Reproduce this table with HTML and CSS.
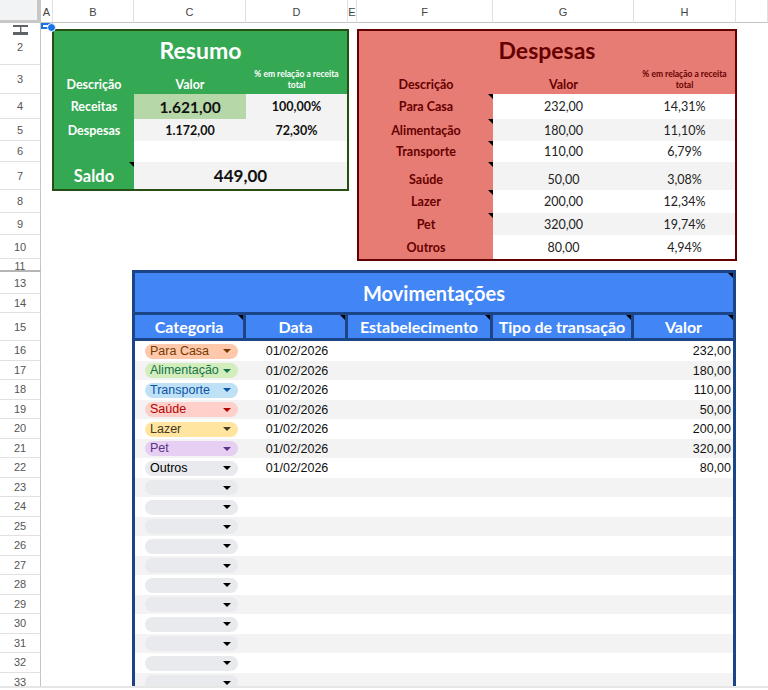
FILE: index.html
```html
<!DOCTYPE html>
<html lang="pt-BR">
<head>
<meta charset="utf-8">
<title>Controle financeiro</title>
<link rel="stylesheet" href="styles.css">
</head>
<body>
<div class="sheet">
  <div class="corner"></div>
  <div class="ch">A</div>
  <div class="ch">B</div>
  <div class="ch">C</div>
  <div class="ch">D</div>
  <div class="ch">E</div>
  <div class="ch">F</div>
  <div class="ch">G</div>
  <div class="ch">H</div>
  <div class="ch"></div>

  <div class="rh r1"><svg class="freeze" width="15" height="10" viewBox="0 0 15 10"><rect x="0" y="0" width="15" height="2" fill="#5f6368"/><rect x="7" y="2" width="1.4" height="5" fill="#5f6368"/><rect x="0" y="7" width="15" height="3" fill="#5f6368"/></svg></div>
  <div class="rh">2</div>
  <div class="rh">3</div>
  <div class="rh">4</div>
  <div class="rh">5</div>
  <div class="rh">6</div>
  <div class="rh">7</div>
  <div class="rh">8</div>
  <div class="rh">9</div>
  <div class="rh">10</div>
  <div class="rh r11">11</div>
  <div class="rh hidden-row"></div>
  <div class="rh">13</div>
  <div class="rh">14</div>
  <div class="rh">15</div>
  <div class="rh">16</div>
  <div class="rh">17</div>
  <div class="rh">18</div>
  <div class="rh">19</div>
  <div class="rh">20</div>
  <div class="rh">21</div>
  <div class="rh">22</div>
  <div class="rh">23</div>
  <div class="rh">24</div>
  <div class="rh">25</div>
  <div class="rh">26</div>
  <div class="rh">27</div>
  <div class="rh">28</div>
  <div class="rh">29</div>
  <div class="rh">30</div>
  <div class="rh">31</div>
  <div class="rh">32</div>
  <div class="rh">33</div>

  <div class="sel"></div>

  <section class="resumo">
    <h2 class="rs-title">Resumo</h2>
    <div class="rs-lab bottom">Descrição</div>
    <div class="rs-lab bottom">Valor</div>
    <div class="pct">% em relação a receita total</div>
    <div class="rs-lab">Receitas</div>
    <div class="rs-val rec">1.621,00</div>
    <div class="rs-val gray">100,00%</div>
    <div class="rs-lab">Despesas</div>
    <div class="rs-val gray">1.172,00</div>
    <div class="rs-val gray">72,30%</div>
    <div class="rs-lab"></div>
    <div class="rs-val"></div>
    <div class="rs-val"></div>
    <div class="rs-lab saldo note">Saldo</div>
    <div class="rs-val saldo-v gray">449,00</div>
  </section>

  <section class="despesas">
    <h2 class="ds-title">Despesas</h2>
    <div class="ds-lab bottom">Descrição</div>
    <div class="ds-lab bottom">Valor</div>
    <div class="pct dark">% em relação a receita total</div>

    <div class="ds-lab note">Para Casa</div><div class="ds-val">232,00</div><div class="ds-val">14,31%</div>
    <div class="ds-lab note">Alimentação</div><div class="ds-val gray">180,00</div><div class="ds-val gray">11,10%</div>
    <div class="ds-lab note">Transporte</div><div class="ds-val">110,00</div><div class="ds-val">6,79%</div>
    <div class="ds-lab note low">Saúde</div><div class="ds-val gray low">50,00</div><div class="ds-val gray low">3,08%</div>
    <div class="ds-lab note">Lazer</div><div class="ds-val">200,00</div><div class="ds-val">12,34%</div>
    <div class="ds-lab note">Pet</div><div class="ds-val gray">320,00</div><div class="ds-val gray">19,74%</div>
    <div class="ds-lab">Outros</div><div class="ds-val">80,00</div><div class="ds-val">4,94%</div>
  </section>

  <section class="mov">
    <h2 class="mv-title note">Movimentações</h2>
    <div class="mv-head">
      <div class="mv-hc note">Categoria</div>
      <div class="mv-hc note">Data</div>
      <div class="mv-hc note">Estabelecimento</div>
      <div class="mv-hc note">Tipo de transação</div>
      <div class="mv-hc note">Valor</div>
    </div>
    <div class="mv-body">
      <div class="mv-row"><span class="chip c-casa">Para Casa<i></i></span><span class="date">01/02/2026</span><span></span><span></span><span class="amt">232,00</span></div>
      <div class="mv-row"><span class="chip c-alim">Alimentação<i></i></span><span class="date">01/02/2026</span><span></span><span></span><span class="amt">180,00</span></div>
      <div class="mv-row"><span class="chip c-trans">Transporte<i></i></span><span class="date">01/02/2026</span><span></span><span></span><span class="amt">110,00</span></div>
      <div class="mv-row"><span class="chip c-saude">Saúde<i></i></span><span class="date">01/02/2026</span><span></span><span></span><span class="amt">50,00</span></div>
      <div class="mv-row"><span class="chip c-lazer">Lazer<i></i></span><span class="date">01/02/2026</span><span></span><span></span><span class="amt">200,00</span></div>
      <div class="mv-row"><span class="chip c-pet">Pet<i></i></span><span class="date">01/02/2026</span><span></span><span></span><span class="amt">320,00</span></div>
      <div class="mv-row"><span class="chip c-out">Outros<i></i></span><span class="date">01/02/2026</span><span></span><span></span><span class="amt">80,00</span></div>
      <div class="mv-row"><span class="chip c-out"><i></i></span></div>
      <div class="mv-row"><span class="chip c-out"><i></i></span></div>
      <div class="mv-row"><span class="chip c-out"><i></i></span></div>
      <div class="mv-row"><span class="chip c-out"><i></i></span></div>
      <div class="mv-row"><span class="chip c-out"><i></i></span></div>
      <div class="mv-row"><span class="chip c-out"><i></i></span></div>
      <div class="mv-row"><span class="chip c-out"><i></i></span></div>
      <div class="mv-row"><span class="chip c-out"><i></i></span></div>
      <div class="mv-row"><span class="chip c-out"><i></i></span></div>
      <div class="mv-row"><span class="chip c-out"><i></i></span></div>
      <div class="mv-row"><span class="chip c-out"><i></i></span></div>
    </div>
  </section>
</div>
</body>
</html>
```

FILE: styles.css
```css
* { box-sizing: border-box; margin: 0; padding: 0; }

html, body {
  width: 768px;
  height: 690px;
  overflow: hidden;
  background: #fff;
}

body {
  font-family: "Liberation Sans", Arial, sans-serif;
  color: #000;
}

.sheet {
  display: grid;
  grid-template-columns: 41px 12px 81px 112px 102px 9px 136px 141px 102px 32px;
  grid-template-rows: 23px 6px 36px 29px 25px 22px 21px 28px 23px 22px 24px 11px 2px 22px 19px 28px repeat(18, 19.5px);
  height: 688px;
  overflow: hidden;
  border-bottom: 2px solid #e6e6e6;
}

/* headers */
.corner {
  grid-column: 1;
  grid-row: 1;
  background: #f1f3f4;
  border-right: 4px solid #c7c7c7;
  border-bottom: 3px solid #c7c7c7;
}

.ch {
  grid-row: 1;
  display: flex;
  align-items: center;
  justify-content: center;
  font-size: 11px;
  color: #444;
  background: #fff;
  border-right: 1px solid #e1e1e1;
  border-bottom: 1px solid #c4c4c4;
  padding-top: 1px;
}

.rh {
  grid-column: 1;
  display: flex;
  align-items: center;
  justify-content: center;
  font-size: 11px;
  color: #555;
  background: #fff;
  border-right: 1px solid #c4c4c4;
  border-bottom: 1px solid #e1e1e1;
  overflow: hidden;
}

.rh.r1 {
  position: relative;
  overflow: visible;
  border-bottom: none;
  z-index: 2;
}

.freeze {
  position: absolute;
  top: 2px;
  left: 13px;
}

.rh.r11 {
  align-items: center;
  font-size: 10.5px;
  line-height: 10px;
  border-bottom: none;
  overflow: visible;
  padding-top: 2px;
}

.rh.hidden-row {
  border-top: 1px solid #b5b5b5;
  border-bottom: 1px solid #b5b5b5;
  background: #fff;
}

.sel {
  grid-column: 2;
  grid-row: 2;
  border: 2px solid #1a73e8;
  position: relative;
  z-index: 3;
}

.sel::after {
  content: "";
  position: absolute;
  right: -5px;
  bottom: -5px;
  width: 7px;
  height: 7px;
  border-radius: 50%;
  background: #1a73e8;
  border: 1px solid #fff;
}

/* notes */
.note { position: relative; }
.note::after {
  content: "";
  position: absolute;
  top: 0;
  right: 0;
  border-top: 5px solid #000;
  border-left: 5px solid transparent;
}

/* shared block text */
.resumo, .despesas, .mov {
  font-family: Lato, "Open Sans", sans-serif;
}

.pct {
  display: flex;
  align-items: center;
  justify-content: center;
  text-align: center;
  font-size: 8.5px;
  font-weight: 700;
  line-height: 11px;
  color: #fff;
  padding: 0 4px;
}

.pct.dark { color: #660000; }

.bottom { align-items: flex-end !important; padding-bottom: 2px; }

/* Resumo */
.resumo {
  grid-column: 3 / 6;
  grid-row: 3 / 9;
  margin: 0 -1px -1px -1px;
  display: grid;
  grid-template-columns: 80px 112px 1fr;
  grid-template-rows: 34px 29px 25px 22px 21px 1fr;
  background: #34a853;
  border: 2px solid #274e13;
}

.rs-title {
  grid-column: 1 / 4;
  display: flex;
  align-items: center;
  justify-content: center;
  font-size: 23px;
  font-weight: 700;
  color: #fff;
  padding-top: 3px;
}

.rs-lab {
  display: flex;
  align-items: center;
  justify-content: center;
  font-size: 12.5px;
  font-weight: 700;
  color: #fff;
}

.rs-val {
  display: flex;
  align-items: center;
  justify-content: center;
  font-size: 12.5px;
  font-weight: 700;
  color: #111;
  background: #fff;
}

.rs-val.gray { background: #f3f3f3; }

.rs-val.rec {
  background: #b6d7a8;
  font-size: 15.5px;
}

.rs-lab.saldo {
  font-size: 16.5px;
  align-items: flex-end;
  padding-bottom: 3px;
}

.rs-val.saldo-v {
  grid-column: 2 / 4;
  font-size: 17px;
  align-items: flex-end;
  padding-bottom: 3px;
}

/* Despesas */
.despesas {
  grid-column: 7 / 10;
  grid-row: 3 / 12;
  margin: 0 -1px -2px 0;
  display: grid;
  grid-template-columns: 134px 141px 1fr;
  grid-template-rows: 34px 29px 25px 22px 21px 28px 23px 22px 1fr;
  background: #e67c73;
  border: 2px solid #660000;
}

.ds-title {
  grid-column: 1 / 4;
  display: flex;
  align-items: center;
  justify-content: center;
  font-size: 23px;
  font-weight: 700;
  color: #660000;
  padding-top: 3px;
}

.ds-lab {
  display: flex;
  align-items: center;
  justify-content: center;
  font-size: 12.5px;
  font-weight: 700;
  color: #660000;
}

.ds-val {
  display: flex;
  align-items: center;
  justify-content: center;
  font-size: 12.5px;
  color: #222;
  background: #fff;
}

.ds-val.gray { background: #f3f3f3; }

.low { align-items: flex-end; padding-bottom: 3px; }

/* Movimentações */
.mov {
  grid-column: 4 / 10;
  grid-row: 14 / 35;
  margin: -2px 0 0 -2px;
  display: flex;
  flex-direction: column;
  border: 3px solid #1c4587;
  border-bottom: none;
  background: #fff;
}

.mv-title {
  height: 42px;
  flex: none;
  display: flex;
  align-items: center;
  justify-content: center;
  background: #4285f4;
  border-bottom: 3px solid #1c4587;
  font-size: 20px;
  font-weight: 700;
  color: #fff;
  padding-top: 1px;
}

.mv-head {
  height: 26px;
  flex: none;
  display: grid;
  grid-template-columns: 111px 102px 145px 141px 1fr;
  background: #4285f4;
  border-bottom: 3px solid #1c4587;
}

.mv-hc {
  display: flex;
  align-items: center;
  justify-content: center;
  font-size: 16px;
  font-weight: 700;
  color: #fff;
  border-right: 3px solid #1c4587;
  white-space: nowrap;
}

.mv-hc:last-child { border-right: none; }

.mv-body {
  display: flex;
  flex-direction: column;
}

.mv-row {
  height: 19.5px;
  flex: none;
  display: grid;
  grid-template-columns: 111px 102px 145px 141px 1fr;
  align-items: center;
  font-family: "Liberation Sans", Arial, sans-serif;
  font-size: 12.5px;
  background: #fff;
  padding-top: 1px;
}

.mv-row:nth-child(even) { background: #f3f3f3; }

.chip {
  margin-left: 10px;
  width: 93px;
  height: 15px;
  border-radius: 8px;
  display: flex;
  align-items: center;
  justify-content: space-between;
  padding: 0 7px 0 5px;
  line-height: 15px;
  white-space: nowrap;
}

.chip i {
  display: block;
  margin-left: auto;
  width: 0;
  height: 0;
  border-left: 4px solid transparent;
  border-right: 4px solid transparent;
  border-top: 4px solid currentColor;
}

.c-casa { background: #ffc8aa; color: #753800; }
.c-alim { background: #d4edbc; color: #11734b; }
.c-trans { background: #bfe1f6; color: #0a53a8; }
.c-saude { background: #ffcfc9; color: #b10202; }
.c-lazer { background: #ffe5a0; color: #473821; }
.c-pet { background: #e6cff2; color: #5a3286; }
.c-out { background: #e8eaed; color: #000; }

.date {
  text-align: center;
  color: #111;
}

.amt {
  text-align: right;
  padding-right: 2px;
  color: #111;
}
```
